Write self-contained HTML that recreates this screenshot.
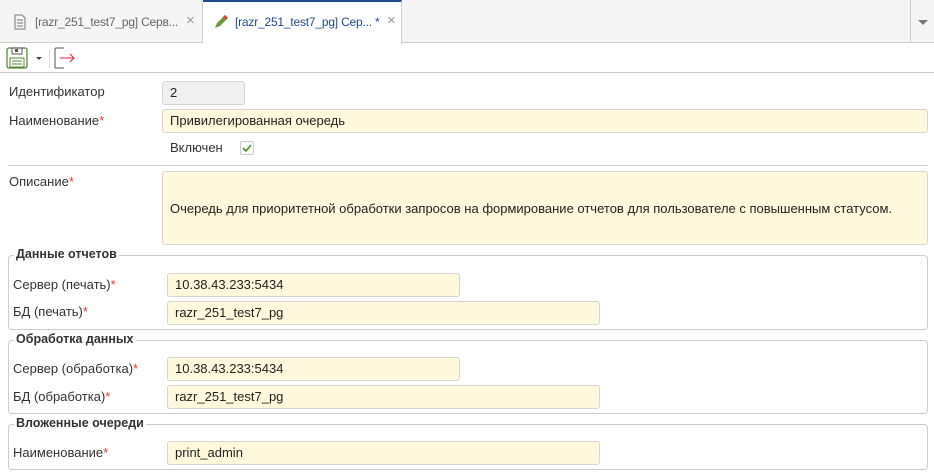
<!DOCTYPE html><html><head><meta charset="utf-8"><style>
*{box-sizing:border-box}body{margin:0;width:934px;height:476px;overflow:hidden;background:#fff;font-family:"Liberation Sans",sans-serif;font-size:13px;color:#333;position:relative}
.a{position:absolute}
.in{position:absolute;background:#fef9dc;border:1px solid #d4d4d4;border-radius:3px;padding:0 0 0 7px;line-height:21px;color:#222}
.lb{position:absolute;color:#333}
.r{color:#e03a3a}
.fs{position:absolute;left:8px;width:920px;border:1px solid #ccc;border-radius:4px}
.lg{position:absolute;left:14px;background:#fff;padding:0 2px;font-weight:bold;color:#333;font-size:12.5px}
.tb{font-size:12px;white-space:nowrap;letter-spacing:-0.2px}
</style></head><body>
<div class="a" style="left:0;top:0;width:934px;height:43px;background:#f5f5f5;border-bottom:1px solid #ccc"></div>
<div class="a" style="left:0;top:0;width:203px;height:43px;border-right:1px solid #ccc;border-top-right-radius:4px"></div>
<svg class="a" style="left:14px;top:14px" width="12" height="16"><path d="M1 1h7l3 3v11H1z" fill="none" stroke="#777"/><path d="M3 6h6M3 9h6M3 12h6" stroke="#777"/></svg>
<div class="lb tb" style="left:35px;top:15px;color:#666">[razr_251_test7_pg] Серв...</div>
<div class="lb" style="left:186px;top:12px;color:#999;font-size:15px">×</div>
<div class="a" style="left:203px;top:0;width:199px;height:44px;background:#fff;border-top:2px solid #1e4a8a;border-right:1px solid #ccc"></div>
<svg class="a" style="left:213px;top:14px" width="16" height="16"><path d="M2 14l2-5 8-8 3 3-8 8z" fill="#6a9a3a"/><path d="M11 2l3 3" stroke="#d44" stroke-width="3"/></svg>
<div class="lb tb" style="left:235px;top:15px;color:#1e4a8a">[razr_251_test7_pg] Сер...</div>
<div class="lb tb" style="left:375px;top:15px;color:#1e4a8a">*</div>
<div class="lb" style="left:387px;top:12px;color:#999;font-size:15px">×</div>
<div class="a" style="left:910px;top:0;width:1px;height:43px;background:#ccc"></div>
<div class="a" style="left:918px;top:20px;border:5px solid transparent;border-top:5px solid #777;border-bottom:0"></div>
<svg class="a" style="left:6px;top:47px" width="22" height="22"><rect x="1" y="1" width="20" height="20" rx="2" fill="none" stroke="#5a8a3a" stroke-width="1.3"/><rect x="6" y="1" width="10" height="6" fill="none" stroke="#555"/><rect x="9" y="2" width="3" height="3" fill="#555"/><rect x="4" y="11" width="14" height="9" fill="none" stroke="#5a8a3a"/><path d="M6 14h10M6 17h10" stroke="#5a8a3a"/></svg>
<div class="a" style="left:36px;top:57px;border:3px solid transparent;border-top:3px solid #444;border-bottom:0"></div>
<div class="a" style="left:49px;top:50px;width:1px;height:18px;background:#ddd"></div>
<svg class="a" style="left:54px;top:47px" width="22" height="22"><path d="M10 1H2a1 1 0 0 0-1 1v18a1 1 0 0 0 1 1h8" fill="none" stroke="#555"/><path d="M6 11h14M16 7l4 4-4 4" fill="none" stroke="#e23"/></svg>
<div class="a" style="left:0;top:72px;width:934px;height:1px;background:#ccc"></div>
<div class="lb" style="left:9px;top:84px">Идентификатор</div>
<div class="in" style="left:162px;top:81px;width:83px;height:24px;background:#f0f0f0;line-height:22px">2</div>
<div class="lb" style="left:9px;top:113px">Наименование<span class="r">*</span></div>
<div class="in" style="left:162px;top:109px;width:766px;height:24px;line-height:22px">Привилегированная очередь</div>
<div class="lb" style="left:170px;top:140px">Включен</div>
<div class="a" style="left:240px;top:141px;width:14px;height:14px;border:1px solid #ccc;border-radius:2px"></div>
<svg class="a" style="left:241px;top:142px" width="12" height="12"><path d="M2 6l3 3 5-6" fill="none" stroke="#4a8a2a" stroke-width="1.6"/></svg>
<div class="a" style="left:8px;top:165px;width:920px;height:1px;background:#ccc"></div>
<div class="lb" style="left:9px;top:174px">Описание<span class="r">*</span></div>
<div class="in" style="left:162px;top:171px;width:766px;height:74px;line-height:74px">Очередь для приоритетной обработки запросов на формирование отчетов для пользователе с повышенным статусом.</div>
<div class="fs" style="top:255px;height:75px"></div><div class="lg" style="top:247px">Данные отчетов</div>
<div class="lb" style="left:13px;top:277px">Сервер (печать)<span class="r">*</span></div>
<div class="in" style="left:167px;top:273px;width:293px;height:24px;line-height:22px">10.38.43.233:5434</div>
<div class="lb" style="left:13px;top:304px">БД (печать)<span class="r">*</span></div>
<div class="in" style="left:167px;top:301px;width:433px;height:24px;line-height:22px">razr_251_test7_pg</div>
<div class="fs" style="top:340px;height:74px"></div><div class="lg" style="top:332px">Обработка данных</div>
<div class="lb" style="left:13px;top:361px">Сервер (обработка)<span class="r">*</span></div>
<div class="in" style="left:167px;top:357px;width:293px;height:24px;line-height:22px">10.38.43.233:5434</div>
<div class="lb" style="left:13px;top:389px">БД (обработка)<span class="r">*</span></div>
<div class="in" style="left:167px;top:385px;width:433px;height:24px;line-height:22px">razr_251_test7_pg</div>
<div class="fs" style="top:424px;height:46px"></div><div class="lg" style="top:416px">Вложенные очереди</div>
<div class="lb" style="left:13px;top:445px">Наименование<span class="r">*</span></div>
<div class="in" style="left:167px;top:441px;width:433px;height:24px;line-height:22px">print_admin</div>
</body></html>
